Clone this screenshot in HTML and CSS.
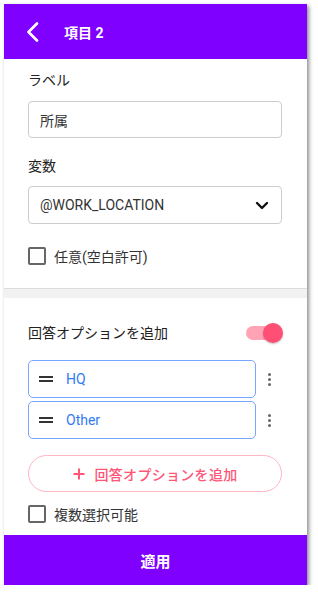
FILE: index.html
```html
<!DOCTYPE html>
<html lang="ja">
<head>
  <meta charset="UTF-8">
  <meta name="viewport" content="width=device-width, initial-scale=1.0">
  <title>項目 2</title>
  <link rel="stylesheet" href="styles.css">
</head>
<body>
  <div class="panel">
    <header class="topbar">
      <button class="back" aria-label="戻る">
        <svg width="14" height="20" viewBox="0 0 14 20"><path d="M11 1.5 L2.5 10 L11 18.5" fill="none" stroke="#fff" stroke-width="2.6" stroke-linecap="round" stroke-linejoin="round"/></svg>
      </button>
      <h1>項目 2</h1>
    </header>

    <main class="content">
      <section class="fields">
        <label class="field-label">ラベル</label>
        <div class="input">所属</div>

        <label class="field-label var-label">変数</label>
        <div class="input select">
          <span>@WORK_LOCATION</span>
          <svg width="14" height="9" viewBox="0 0 14 9"><path d="M2 2 L7 7 L12 2" fill="none" stroke="#111" stroke-width="2.4" stroke-linecap="round" stroke-linejoin="round"/></svg>
        </div>

        <div class="check first-check">
          <span class="box"></span>
          <span>任意(空白許可)</span>
        </div>
      </section>

      <div class="divider"></div>

      <section class="options">
        <div class="options-head">
          <span>回答オプションを追加</span>
          <span class="toggle"><span class="thumb"></span></span>
        </div>

        <div class="option-row">
          <div class="option">
            <span class="handle"></span>
            <span>HQ</span>
          </div>
          <span class="kebab"><i></i><i></i><i></i></span>
        </div>
        <div class="option-row">
          <div class="option">
            <span class="handle"></span>
            <span>Other</span>
          </div>
          <span class="kebab"><i></i><i></i><i></i></span>
        </div>

        <button class="add-btn">
          <svg width="12" height="12" viewBox="0 0 12 12"><path d="M6 0.5 V11.5 M0.5 6 H11.5" stroke="#ff5577" stroke-width="2"/></svg>
          <span>回答オプションを追加</span>
        </button>

        <div class="check">
          <span class="box"></span>
          <span>複数選択可能</span>
        </div>
      </section>
    </main>

    <footer class="footer">適用</footer>
  </div>
</body>
</html>
```

FILE: styles.css
```css
body {
  margin: 0;
  padding: 4px 0 0 4px;
  background: #fff;
  font-family: Roboto, "Noto Sans CJK JP", sans-serif;
  color: #333;
}

.panel {
  width: 303px;
  height: 581px;
  display: flex;
  flex-direction: column;
  background: #fff;
  box-shadow: 2px 2px 4px rgba(0, 0, 0, 0.45);
}

.topbar {
  height: 55px;
  flex: none;
  background: #7f00ff;
  display: flex;
  align-items: center;
  color: #fff;
}

.back {
  background: none;
  border: none;
  padding: 0;
  margin-left: 22px;
  width: 14px;
  height: 20px;
  display: flex;
  cursor: pointer;
}

.topbar h1 {
  margin: 0 0 0 24px;
  font-size: 14px;
  font-weight: 700;
}

.content {
  flex: 1;
  display: flex;
  flex-direction: column;
}

.fields {
  padding: 11px 25px 0 24px;
  display: flex;
  flex-direction: column;
}

.field-label {
  font-size: 14px;
  line-height: 20px;
  font-weight: 400;
  color: #222;
}

.var-label {
  margin-top: 18px;
}

.input {
  margin-top: 11px;
  height: 37px;
  box-sizing: border-box;
  border: 1px solid #ccc;
  border-radius: 4px;
  padding: 0 11px;
  display: flex;
  align-items: center;
  font-size: 14px;
  color: #333;
}

.select {
  margin-top: 10px;
  height: 38px;
  justify-content: space-between;
  padding-right: 12px;
}

.check {
  display: flex;
  align-items: center;
  gap: 8px;
  font-size: 14px;
  color: #333;
}

.first-check {
  margin-top: 22px;
}

.box {
  width: 18px;
  height: 18px;
  box-sizing: border-box;
  border: 2px solid #666;
  border-radius: 2px;
}

.divider {
  margin-top: 22px;
  height: 10px;
  border-top: 1px solid #ddd;
  background: #f2f2f2;
  box-sizing: border-box;
}

.options {
  padding: 25px 25px 0 24px;
  display: flex;
  flex-direction: column;
}

.options-head {
  display: flex;
  justify-content: space-between;
  align-items: center;
  font-size: 14px;
  line-height: 20px;
  color: #222;
}

.toggle {
  position: relative;
  width: 34px;
  height: 14px;
  border-radius: 7px;
  background: #ffa3b5;
  margin-right: 2px;
}

.thumb {
  position: absolute;
  right: -3px;
  top: -3px;
  width: 20px;
  height: 20px;
  border-radius: 50%;
  background: #ff4f74;
  box-shadow: 0 1px 2px rgba(0, 0, 0, 0.25);
}

.option-row {
  display: flex;
  align-items: center;
  margin-top: 3px;
}

.options-head + .option-row {
  margin-top: 17px;
}

.option {
  width: 228px;
  height: 38px;
  box-sizing: border-box;
  border: 1.5px solid #76a6ff;
  border-radius: 5px;
  display: flex;
  align-items: center;
  padding-left: 10px;
  gap: 13px;
  font-size: 14px;
  color: #2f7bf5;
}

.handle {
  width: 14px;
  height: 6px;
  box-sizing: border-box;
  border-top: 2px solid #333;
  border-bottom: 2px solid #333;
}

.kebab {
  flex: 1;
  display: flex;
  flex-direction: column;
  align-items: center;
  gap: 2px;
}

.kebab i {
  width: 3px;
  height: 3px;
  border-radius: 50%;
  background: #666;
}

.add-btn {
  margin-top: 16px;
  height: 37px;
  border: 1px solid #ffb5c3;
  border-radius: 19px;
  background: #fff;
  display: flex;
  align-items: center;
  justify-content: center;
  gap: 10px;
  font-family: inherit;
  font-size: 14px;
  font-weight: 500;
  letter-spacing: 0.3px;
  color: #ff5577;
  cursor: pointer;
}

.options .check {
  margin-top: 12px;
}

.footer {
  height: 50px;
  flex: none;
  background: #7f00ff;
  color: #fff;
  display: flex;
  align-items: center;
  justify-content: center;
  font-size: 15px;
  font-weight: 700;
}
```
